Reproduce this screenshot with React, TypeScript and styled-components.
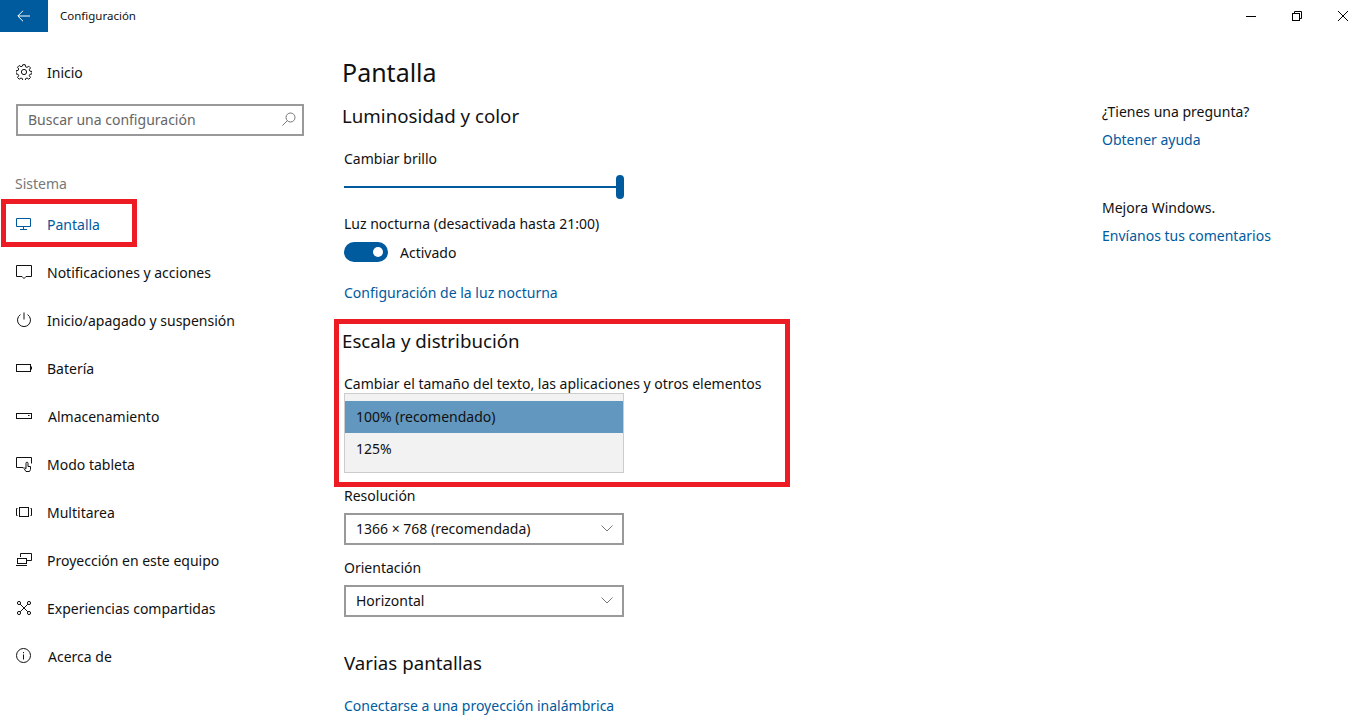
import React from 'react';
import styled, { createGlobalStyle } from 'styled-components';

const GlobalStyle = createGlobalStyle`
  html, body {
    margin: 0;
    height: 725px;
    overflow: hidden;
    background: #fff;
    font-family: "Noto Sans", "Open Sans", sans-serif;
    color: #111;
  }
  * { box-sizing: border-box; }
`;

const Window = styled.div`
  display: flex;
  flex-direction: column;
  height: 725px;
  position: relative;
`;

const TitleBar = styled.div`
  display: flex;
  align-items: center;
  height: 32px;
  flex: none;
`;

const BackButton = styled.div`
  width: 48px;
  height: 32px;
  background: #005a9e;
  display: flex;
  align-items: center;
  justify-content: center;
`;

const WindowTitle = styled.div`
  margin-left: 12px;
  padding-bottom: 2px;
  font-size: 11.5px;
  flex: 1;
`;

const WindowButton = styled.div`
  width: 46px;
  height: 32px;
  display: flex;
  align-items: center;
  justify-content: center;
`;

const Body = styled.div`
  display: flex;
  flex: 1;
  min-height: 0;
`;

const Sidebar = styled.nav`
  width: 320px;
  flex: none;
  padding-top: 24px;
`;

const HomeRow = styled.div`
  display: flex;
  align-items: center;
  height: 32px;
  padding-left: 16px;
  font-size: 14px;
`;

const SearchBox = styled.div`
  display: flex;
  align-items: center;
  justify-content: space-between;
  margin: 16px 16px 0;
  width: 288px;
  height: 32px;
  border: 2px solid #999;
  padding: 0 6px 2px 10px;
  font-size: 14px;
  color: #666;
`;

const SectionLabel = styled.div`
  margin: 35px 0 0 15px;
  height: 29px;
  line-height: 26px;
  font-size: 14px;
  color: #777;
`;

const NavItem = styled.div<{ $active?: boolean }>`
  position: relative;
  display: flex;
  align-items: center;
  height: 48px;
  padding-left: 16px;
  font-size: 14px;
  color: ${(p) => (p.$active ? '#005a9e' : '#111')};
`;

const IconSlot = styled.span`
  width: 16px;
  height: 16px;
  flex: none;
  display: flex;
`;

const NavLabel = styled.span<{ $nudge?: boolean }>`
  margin-left: ${(p) => (p.$nudge ? '16px' : '15px')};
`;

const NavHighlight = styled.div`
  position: absolute;
  left: 1px;
  top: -1px;
  width: 136px;
  height: 48px;
  border: 5px solid #ed1c24;
`;

const Main = styled.main`
  flex: 1;
  padding: 22px 0 0 22px;
`;

const PageTitle = styled.h1`
  margin: 0;
  font-size: 25px;
  font-weight: 400;
  height: 36px;
  line-height: 36px;
`;

const Heading = styled.h2<{ $top: number; $indent?: number }>`
  margin: ${(p) => p.$top}px 0 0 ${(p) => p.$indent ?? 0}px;
  font-size: 18.7px;
  font-weight: 400;
  height: 28px;
  line-height: 28px;
`;

const Label = styled.div<{ $top: number }>`
  margin: ${(p) => p.$top}px 0 0 2px;
  font-size: 14px;
  height: 20px;
  line-height: 22px;
`;

const Slider = styled.div`
  position: relative;
  margin: 7px 0 0 2px;
  width: 280px;
  height: 24px;
  display: flex;
  align-items: center;
`;

const SliderTrack = styled.div`
  width: 100%;
  height: 2px;
  background: #005a9e;
`;

const SliderThumb = styled.div`
  position: absolute;
  right: 0;
  top: 0;
  width: 8px;
  height: 24px;
  border-radius: 4px;
  background: #005a9e;
`;

const ToggleRow = styled.div`
  display: flex;
  align-items: center;
  margin: 9px 0 0 2px;
  height: 20px;
  font-size: 14px;
`;

const Toggle = styled.div`
  width: 44px;
  height: 20px;
  border-radius: 10px;
  background: #005a9e;
  display: flex;
  align-items: center;
  justify-content: flex-end;
  padding-right: 5px;
  margin-right: 12px;
`;

const ToggleKnob = styled.div`
  width: 10px;
  height: 10px;
  border-radius: 50%;
  background: #fff;
`;

const Link = styled.div<{ $top: number }>`
  margin: ${(p) => p.$top}px 0 0 2px;
  font-size: 14px;
  height: 20px;
  line-height: 22px;
  color: #005a9e;
`;

const ScaleBlock = styled.section`
  position: relative;
`;

const ScaleHighlight = styled.div`
  position: absolute;
  left: -8px;
  top: -8px;
  width: 456px;
  height: 168px;
  border: 5px solid #ed1c24;
  pointer-events: none;
`;

const Popup = styled.div`
  margin: 0 0 0 2px;
  width: 280px;
  height: 80px;
  padding: 7px 0 0;
  background: #f2f2f2;
  border: 1px solid #ccc;
  font-size: 14px;
`;

const PopupItem = styled.div<{ $selected?: boolean }>`
  height: 32px;
  line-height: 31px;
  padding-left: 11px;
  background: ${(p) => (p.$selected ? '#6297c0' : 'transparent')};
`;

const Select = styled.div`
  display: flex;
  align-items: center;
  justify-content: space-between;
  margin: 8px 0 0 2px;
  width: 280px;
  height: 32px;
  border: 2px solid #999;
  padding: 0 9px 2px 10px;
  font-size: 14px;
`;

const Aside = styled.aside`
  width: 264px;
  flex: none;
  padding-top: 70px;
`;

const AsideText = styled.div<{ $top: number }>`
  margin-top: ${(p) => p.$top}px;
  height: 20px;
  line-height: 20px;
  font-size: 14px;
`;

const AsideLink = styled(AsideText)`
  color: #005a9e;
`;

const Icon = ({ children }: { children: React.ReactNode }) => (
  <IconSlot>
    <svg width="16" height="16" viewBox="0 0 16 16" fill="none" stroke="#111" strokeWidth="1">
      {children}
    </svg>
  </IconSlot>
);

const Chevron = () => (
  <svg width="12" height="7" viewBox="0 0 12 7" fill="none" stroke="#777" strokeWidth="1">
    <path d="M0.5 0.5 L6 6 L11.5 0.5" />
  </svg>
);

const navItems: { label: string; nudge?: boolean; icon: React.ReactNode }[] = [
  {
    label: 'Notificaciones y acciones',
    icon: <path d="M0.5 1.5h15v11h-5.5l-2 2-2-2h-5.5z" />,
  },
  {
    label: 'Inicio/apagado y suspensión',
    icon: (
      <>
        <path d="M4.5 2.6a6.5 6.5 0 1 0 7 0" />
        <path d="M8 0.5v7" />
      </>
    ),
  },
  {
    label: 'Batería',
    icon: (
      <>
        <rect x="0.5" y="4.5" width="14" height="7" />
        <path d="M15.5 6.5v3" />
      </>
    ),
  },
  {
    label: 'Almacenamiento',
    nudge: true,
    icon: (
      <>
        <rect x="0.5" y="5.5" width="15" height="5" />
        <path d="M12 7.5h1.5" />
      </>
    ),
  },
  {
    label: 'Modo tableta',
    icon: (
      <>
        <path d="M7.5 11.5h-7v-10h15v6" />
        <path d="M10 15.5l-2-3 .8-.8 1.2 1V7.2a1 1 0 0 1 2 0v3.3h2.5v3l-1 2z" />
      </>
    ),
  },
  {
    label: 'Multitarea',
    icon: (
      <>
        <rect x="3.5" y="3.5" width="9" height="9" />
        <path d="M1.5 4.5h-1v7h1M14.5 4.5h1v7h-1" />
      </>
    ),
  },
  {
    label: 'Proyección en este equipo',
    icon: (
      <>
        <path d="M4.5 5v-3.5h11v7h-5" />
        <rect x="1.5" y="6.5" width="9" height="5" />
        <path d="M0 13.5h11" />
      </>
    ),
  },
  {
    label: 'Experiencias compartidas',
    icon: (
      <>
        <circle cx="3" cy="3" r="1.6" />
        <circle cx="13" cy="3" r="1.6" />
        <circle cx="3" cy="13" r="1.6" />
        <circle cx="13" cy="13" r="1.6" />
        <path d="M4.2 4.2l7.6 7.6M11.8 4.2l-7.6 7.6" />
      </>
    ),
  },
  {
    label: 'Acerca de',
    nudge: true,
    icon: (
      <>
        <circle cx="7.5" cy="7.5" r="7" />
        <path d="M7.5 6.5v5M7.5 4v1.2" />
      </>
    ),
  },
];

export default function App() {
  return (
    <Window>
      <GlobalStyle />
      <TitleBar>
        <BackButton>
          <svg width="14" height="12" viewBox="0 0 14 12" fill="none" stroke="#fff" strokeWidth="1">
            <path d="M13 6H1M6 0.8L0.8 6 6 11.2" />
          </svg>
        </BackButton>
        <WindowTitle>Configuración</WindowTitle>
        <WindowButton>
          <svg width="10" height="10" viewBox="0 0 10 10" stroke="#000" strokeWidth="1">
            <path d="M0 5.5h10" />
          </svg>
        </WindowButton>
        <WindowButton>
          <svg width="10" height="10" viewBox="0 0 10 10" fill="none" stroke="#000" strokeWidth="1">
            <rect x="0.5" y="2.5" width="7" height="7" />
            <path d="M2.5 2.5v-2h7v7h-2" />
          </svg>
        </WindowButton>
        <WindowButton>
          <svg width="10" height="10" viewBox="0 0 10 10" stroke="#000" strokeWidth="1">
            <path d="M0 0L10 10M10 0L0 10" />
          </svg>
        </WindowButton>
      </TitleBar>
      <Body>
        <Sidebar>
          <HomeRow>
            <Icon>
              <circle cx="8" cy="8" r="2.6" />
              <path d="M6.8 0.7h2.4l.4 2.1 1.4.6 1.8-1.2 1.7 1.7-1.2 1.8.6 1.4 2.1.4v2.4l-2.1.4-.6 1.4 1.2 1.8-1.7 1.7-1.8-1.2-1.4.6-.4 2.1H6.8l-.4-2.1-1.4-.6-1.8 1.2-1.7-1.7 1.2-1.8-.6-1.4-2.1-.4V6.8l2.1-.4.6-1.4-1.2-1.8 1.7-1.7 1.8 1.2 1.4-.6z" />
            </Icon>
            <NavLabel>Inicio</NavLabel>
          </HomeRow>
          <SearchBox>
            Buscar una configuración
            <svg width="14" height="14" viewBox="0 0 14 14" fill="none" stroke="#777" strokeWidth="1">
              <circle cx="8.5" cy="5.5" r="4.5" />
              <path d="M5.3 8.7L0.5 13.5" />
            </svg>
          </SearchBox>
          <SectionLabel>Sistema</SectionLabel>
          <NavItem $active>
            <IconSlot>
              <svg width="16" height="16" viewBox="0 0 16 16" fill="none" stroke="#005a9e" strokeWidth="1">
                <path d="M0.5 2.5h14v8h-14zM7.5 10.5v3M4 13.5h7" />
              </svg>
            </IconSlot>
            <NavLabel>Pantalla</NavLabel>
            <NavHighlight />
          </NavItem>
          {navItems.map((item) => (
            <NavItem key={item.label}>
              <Icon>{item.icon}</Icon>
              <NavLabel $nudge={item.nudge}>{item.label}</NavLabel>
            </NavItem>
          ))}
        </Sidebar>
        <Main>
          <PageTitle>Pantalla</PageTitle>
          <Heading $top={12}>Luminosidad y color</Heading>
          <Label $top={18}>Cambiar brillo</Label>
          <Slider>
            <SliderTrack />
            <SliderThumb />
          </Slider>
          <Label $top={14}>Luz nocturna (desactivada hasta 21:00)</Label>
          <ToggleRow>
            <Toggle>
              <ToggleKnob />
            </Toggle>
            Activado
          </ToggleRow>
          <Link $top={20}>Configuración de la luz nocturna</Link>
          <ScaleBlock>
            <ScaleHighlight />
            <Heading $top={25}>Escala y distribución</Heading>
            <Label $top={18}>Cambiar el tamaño del texto, las aplicaciones y otros elementos</Label>
            <Popup>
              <PopupItem $selected>100% (recomendado)</PopupItem>
              <PopupItem>125%</PopupItem>
            </Popup>
          </ScaleBlock>
          <Label $top={12}>Resolución</Label>
          <Select>
            1366 × 768 (recomendada)
            <Chevron />
          </Select>
          <Label $top={12}>Orientación</Label>
          <Select>
            Horizontal
            <Chevron />
          </Select>
          <Heading $top={32} $indent={2}>Varias pantallas</Heading>
          <Link $top={18}>Conectarse a una proyección inalámbrica</Link>
        </Main>
        <Aside>
          <AsideText $top={0}>¿Tienes una pregunta?</AsideText>
          <AsideLink $top={8}>Obtener ayuda</AsideLink>
          <AsideText $top={48}>Mejora Windows.</AsideText>
          <AsideLink $top={8}>Envíanos tus comentarios</AsideLink>
        </Aside>
      </Body>
    </Window>
  );
}
